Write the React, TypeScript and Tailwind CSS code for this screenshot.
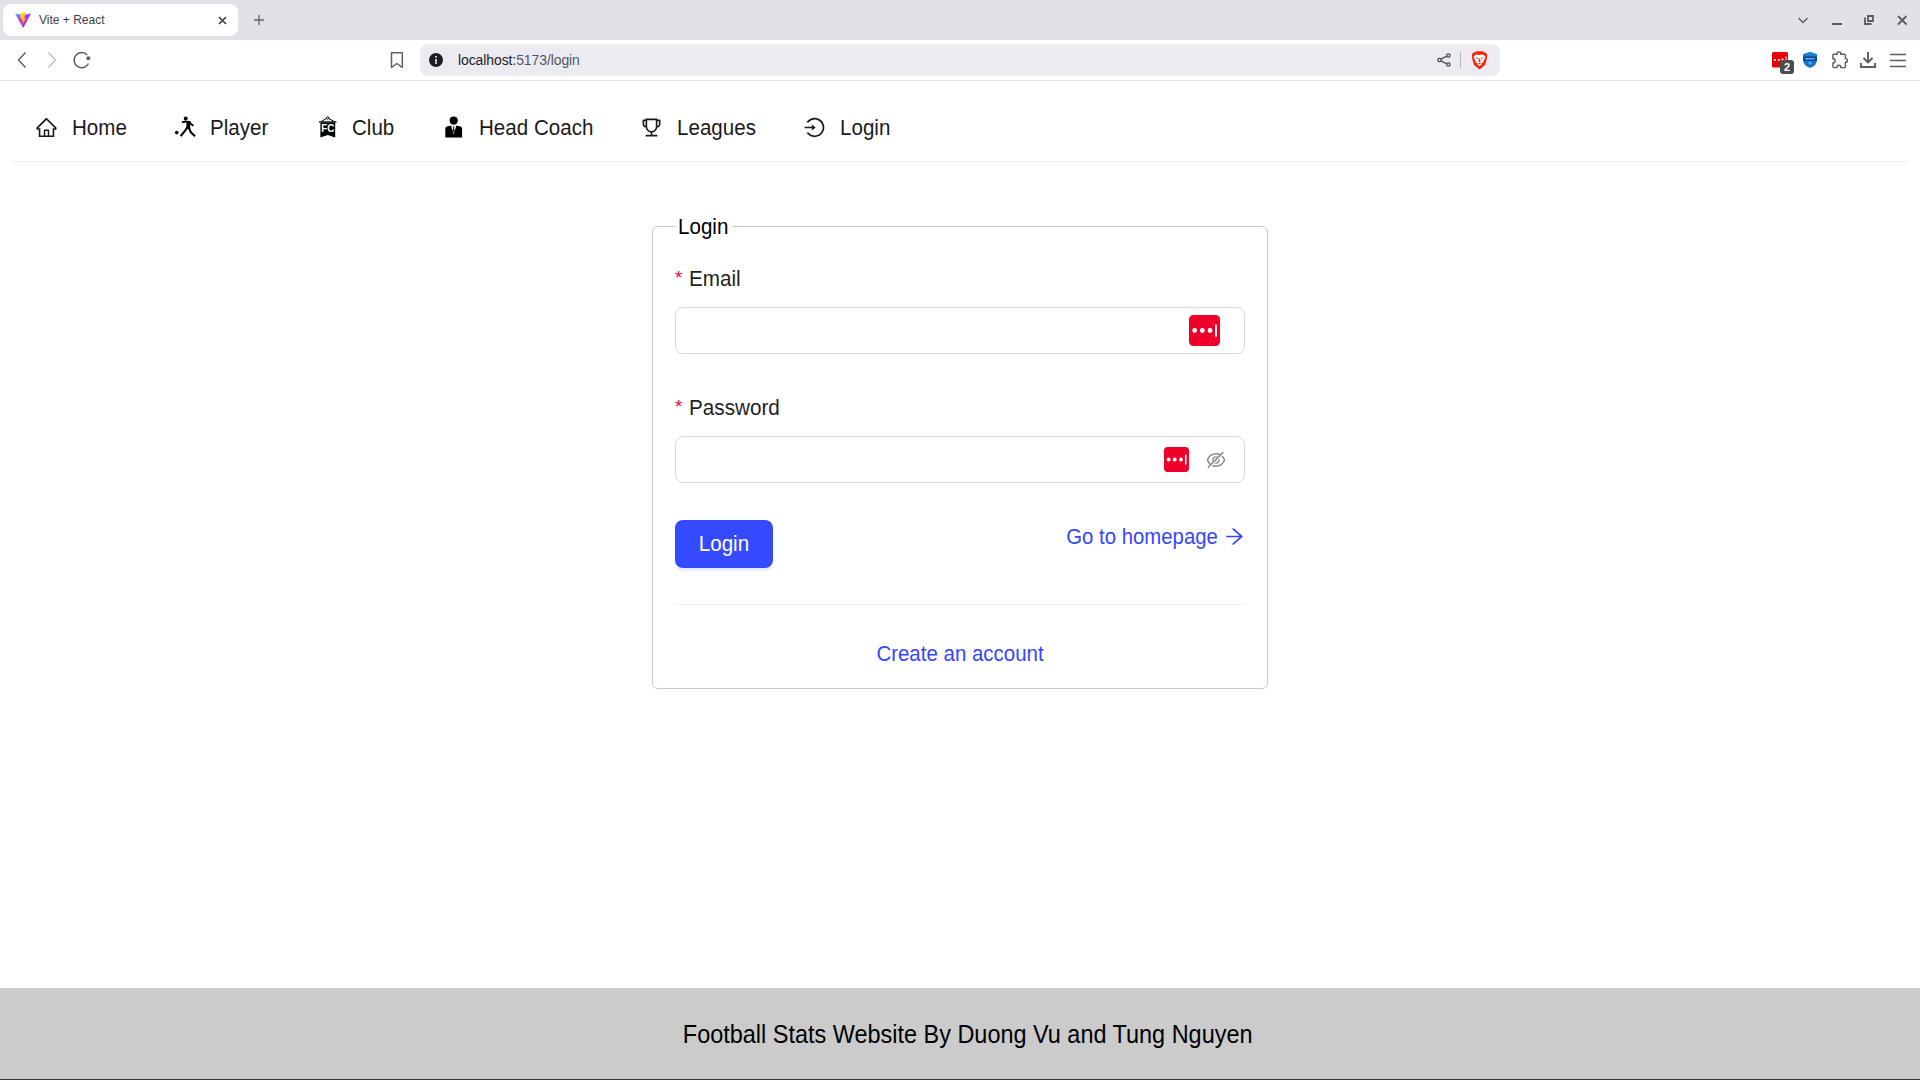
import React from "react";
import {
  AiOutlineHome,
  AiOutlineTrophy,
  AiOutlineLogin,
  AiOutlineEyeInvisible,
  AiOutlineArrowRight,
} from "react-icons/ai";

const PlayerIcon = () => (
  <svg width="23" height="23" viewBox="-1.5 0 23 23" className="block shrink-0">
    <circle cx="11.2" cy="2.6" r="2" />
    <circle cx="2.2" cy="16.6" r="1.8" />
    <path d="M9.5 4.8 L15.6 5 L15.8 13.2 L11.8 12.6 L12 6.8 Z" />
    <path d="M12 5.6 L7.4 6.2 M14.800 5.6 L16.8 8.300 L19 9.800" fill="none" stroke="black" strokeWidth="1.7" />
    <path d="M13 11 L10.400 15 L6.200 20.200 M14.200 11.600 L16.400 16.400 L20.600 20.200" fill="none" stroke="black" strokeWidth="2.1" />
  </svg>
);

const ClubIcon = () => (
  <svg width="23" height="23" viewBox="-3 0 23 23" className="block shrink-0">
    <path d="M3 5.6 L9.7 1.9 L16.4 5.6" fill="none" stroke="black" strokeWidth="1" />
    <circle cx="9.7" cy="1.9" r="1.2" fill="white" stroke="black" strokeWidth="0.9" />
    <path d="M1 5.3h17.4v1.3H1z" />
    <path d="M2.4 6.5h14.8V21.5l-7.4-2.6-7.4 2.6z" />
    <text x="9.8" y="15.9" textAnchor="middle" fontSize="10" fontWeight="700" fill="white" fontFamily="Liberation Sans, sans-serif">FC</text>
  </svg>
);

const CoachIcon = () => (
  <svg width="23" height="23" viewBox="-2.5 0 23 23" className="block shrink-0">
    <circle cx="9.2" cy="4.6" r="4.1" />
    <path d="M.8 21.5v-8.600q0-2.300 2.400-2.700L6 9.800h6.400l2.800.4q2.400.4 2.400 2.700v8.600z" />
    <path d="M6.600 9.500L9.200 18.500L11.800 9.500z" fill="white" />
    <path d="M8.500 10.400h1.400l-.3 1.500.5 3.200-.9 2-.9-2 .5-3.200z" />
  </svg>
);

const ViteLogo = () => (
  <svg width="16" height="16" viewBox="0 0 16 16" className="block">
    <defs>
      <linearGradient id="vite-base" x1="0" y1="0" x2="0.7" y2="1">
        <stop offset="0" stopColor="#30c8ff" />
        <stop offset="0.4" stopColor="#a33cff" />
        <stop offset="1" stopColor="#e600ff" />
      </linearGradient>
      <linearGradient id="vite-bolt" x1="0" y1="0" x2="0" y2="1">
        <stop offset="0" stopColor="#ffe02a" />
        <stop offset="1" stopColor="#ff9d00" />
      </linearGradient>
    </defs>
    <path d="M0 1.6L8 3l8-1.4L8.2 16z" fill="url(#vite-base)" />
    <path d="M11.4 0L5.6 1.1l-.4 6.1 1.9-.4-.6 2.9 1.5-.4-.9 4.1 4-7.3-2 .4z" fill="url(#vite-bolt)" />
  </svg>
);

const BraveIcon = () => (
  <svg width="17" height="19" viewBox="0 0 17 19" className="block">
    <path d="M4 1.4L5.4.2h6.2L13 1.4l1.7.2 1.6 2.2-.5 1.4.3 1.4-1.9 7.2L8.5 18.5 2.8 13.8.9 6.6l.3-1.4L.7 3.8l1.6-2.2z" fill="#fb2207" />
    <path d="M4 4l1.8-.5 2.7.5 2.7-.5L13 4l1.5 2.6-2 2.8.3 1.6-2.3 1.1.2 1.2-2.2 2-2.2-2 .2-1.2L4.2 11l.3-1.6-2-2.8z" fill="white" />
    <path d="M4.600 6.300l2.700.6-.9 1.300zM12.400 6.300l-2.700.6.9 1.300zM7.900 7.500h1.200l.5 3-1.100.9-1.100-.9zM6.900 12.700l1.600-.7 1.600.7-1.600.8z" fill="#fb2207" />
  </svg>
);

const PasswordBadge = ({ size }: { size: number }) => (
  <svg width={size} height={size} viewBox="0 0 31 31" className="block">
    <rect width="31" height="31" rx="4.5" fill="#ee0028" />
    <circle cx="5.7" cy="15.5" r="2.4" fill="white" />
    <circle cx="13.3" cy="15.5" r="2.4" fill="white" />
    <circle cx="21" cy="15.5" r="2.4" fill="white" />
    <rect x="26" y="9.4" width="1.9" height="12.4" rx=".5" fill="white" />
  </svg>
);

const navItems = [
  { label: "Home", icon: <AiOutlineHome size={23} />, width: "w-[138px]" },
  { label: "Player", icon: <PlayerIcon />, width: "w-[142px]" },
  { label: "Club", icon: <ClubIcon />, width: "w-[127px]" },
  { label: "Head Coach", icon: <CoachIcon />, width: "w-[198px]" },
  { label: "Leagues", icon: <AiOutlineTrophy size={23} />, width: "w-[163px]" },
  { label: "Login", icon: <AiOutlineLogin size={23} />, width: "w-[120px]" },
];

const TabStrip = () => (
  <div className="flex h-10 items-center justify-between bg-[#e2e1e8] pl-[3px]">
    <div className="flex items-center">
      <div className="flex h-8 w-[235px] items-center rounded-lg bg-white pl-3 pr-[11px]">
        <ViteLogo />
        <span className="ml-2 flex-1 text-[12px] leading-4 text-[#3d3e45]">Vite + React</span>
        <svg width="9" height="9" viewBox="0 0 9 9"><path d="M1 1l7 7M8 1L1 8" stroke="#3f4047" strokeWidth="1.7" /></svg>
      </div>
      <svg className="ml-4" width="10" height="10" viewBox="0 0 10 10"><path d="M5 0v10M0 5h10" stroke="#66676d" strokeWidth="1.3" /></svg>
    </div>
    <svg width="122" height="40" viewBox="0 0 122 40" fill="none" stroke="#5b5c62" strokeWidth="1.8">
      <path d="M0.5 18l4.5 4.5 4.5-4.5" strokeWidth="1.5" />
      <path d="M34 24h10" strokeWidth="2" />
      <path d="M70 16h5v5h-5zM67 17.5V24h6.5" />
      <path d="M100 16l8.5 8.5M108.5 16l-8.5 8.5" />
    </svg>
  </div>
);

const Toolbar = () => (
  <div className="flex h-[41px] items-center border-b border-[#e2e1e8]">
    <svg width="420" height="40" viewBox="0 0 420 40" fill="none" stroke="#5f6067" strokeWidth="1.5" className="shrink-0">
      <path d="M25.5 12.5L18.5 20l7 7.5" />
      <path d="M48.5 12.5l7 7.5-7 7.5" stroke="#c0c0c4" />
      <path d="M87.3 15A7.6 7.6 0 1 0 88.5 23.5" />
      <circle cx="88.3" cy="18.2" r="2" fill="#5f6067" stroke="none" />
      <path d="M391.5 12.8h10.8v14.7l-5.4-4-5.4 4z" strokeLinejoin="round" />
    </svg>
    <div className="flex h-8 w-[1080px] items-center rounded-lg bg-[#ecebf2] pl-[9px] pr-3">
      <svg width="14" height="14" viewBox="0 0 14 14"><circle cx="7" cy="7" r="7" fill="#1d1e24" /><path d="M7 3v1.7M7 6v5" stroke="#ecebf2" strokeWidth="1.6" /></svg>
      <span className="ml-[15px] flex-1 text-[14px] leading-5 tracking-[-0.1px] text-[#55565d]"><span className="text-[#1d1e24]">localhost:</span>5173/login</span>
      <svg width="14" height="14" viewBox="0 0 14 14" fill="none" stroke="#4c4d54" strokeWidth="1.3"><circle cx="2.5" cy="7" r="1.7" /><circle cx="11.4" cy="2.5" r="1.7" /><circle cx="11.4" cy="11.5" r="1.7" /><path d="M4 6.2l5.8-3M4 7.8l5.8 3" /></svg>
      <div className="ml-[9px] mr-[10px] h-4 w-px bg-[#b3b2b9]" />
      <BraveIcon />
    </div>
    <svg width="150" height="40" viewBox="0 0 150 40" fill="none" stroke="#5b5c62" strokeWidth="1.6" className="ml-auto shrink-0">
      <rect x="2" y="12" width="16" height="15.5" rx="1.5" fill="#e80006" stroke="none" />
      <g fill="white" stroke="none"><circle cx="5" cy="20" r="1.1" /><circle cx="8.8" cy="20" r="1.1" /><circle cx="12.5" cy="19.7" r="1.1" /><path d="M15.5 16.5h1v4h-1z" /></g>
      <rect x="10" y="20" width="14" height="14" rx="3" fill="#4d4e50" stroke="none" />
      <text x="17" y="31" textAnchor="middle" fontSize="11" fontWeight="700" fill="white" stroke="none" fontFamily="Liberation Sans, sans-serif">2</text>
      <path d="M40 12l7 2.3v5.6q0 5.2-7 8.2-7-3-7-8.2v-5.6z" fill="#1671c9" stroke="none" />
      <path d="M40 12l7 2.3v1.2H33v-1.2z" fill="#1b86cb" stroke="none" />
      <path d="M33 16.5h14v4.500H33z" fill="#0b4596" stroke="none" />
      <path d="M35.500 18.800h9" stroke="#8fd5f2" strokeWidth="1.6" strokeDasharray="1.2 .5" />
      <path d="M38.500 23h3M40 21.500v3" stroke="#4fd5ee" strokeWidth="1" />
      <path d="M63.5 14.2h3.6q-.5-2.3 1.8-2.3t1.9 2.3h3.6q1 0 1 1v3.4q2-.2 2 1.8t-2 1.9v4.1q0 1.2-1 1.2h-3.500q0-2.300-2-2.300t-2 2.300h-3q-1 0-1-1V23q2.200 0 2.200-2.200t-2.200-2.300v-3.300q0-1 .6-1z" strokeWidth="1.4" />
      <path d="M98 12v10.5M93.5 18l4.5 4.5 4.5-4.5" strokeWidth="1.9" />
      <path d="M90.9 23v4h14.2v-4" strokeWidth="1.9" />
      <path d="M120 14.5h16M120 20.5h16M120 26.5h16" strokeWidth="1.5" />
    </svg>
  </div>
);

const Label = ({ text }: { text: string }) => (
  <div className="flex h-8 items-center pb-[2px] text-[22px] text-[#1f1f1f]">
    <span className="mr-2 inline-block w-[6px] text-[19px] leading-5 text-[#ff0044]">*</span>
    <span className="origin-left scale-x-[0.94]">{text}</span>
  </div>
);

export default function App() {
  return (
    <div className="flex h-[1080px] w-[1920px] flex-col overflow-hidden bg-white font-['Liberation_Sans',Arial,sans-serif] text-black">
      <TabStrip />
      <Toolbar />
      <nav className="mx-3 flex h-[81px] items-center border-b border-[#efefef] pl-[23px] pt-[13px]">
        {navItems.map((item) => (
          <a key={item.label} className={`flex items-center gap-[14px] whitespace-nowrap text-[22px] text-[#1a1a1a] ${item.width}`}>
            {item.icon}
            <span className="origin-left scale-x-[0.935]">{item.label}</span>
          </a>
        ))}
      </nav>
      <main className="flex-1 pt-[50px]">
        <fieldset className="mx-auto h-[477px] w-[616px] rounded-md border border-[#c9c9c9] px-[22px]">
          <legend className="h-7 w-[57px] pl-[3px] text-[22px] leading-[29px]"><span className="inline-block origin-left scale-x-[0.935]">Login</span></legend>
          <div className="pt-[23px]">
            <Label text="Email" />
            <div className="mt-3 flex h-[47px] items-center justify-end rounded-lg border border-[#d9d9d9] pr-6">
              <PasswordBadge size={31} />
            </div>
          </div>
          <div className="pt-[38px]">
            <Label text="Password" />
            <div className="mt-3 flex h-[47px] items-center justify-end gap-4 rounded-lg border border-[#d9d9d9] pr-[17px]">
              <PasswordBadge size={25} />
              <AiOutlineEyeInvisible size={22} className="text-[#8c8c8c]" />
            </div>
          </div>
          <div className="mt-[37px] flex items-start justify-between border-b border-[#efefef] pb-9">
            <button className="h-12 w-[98px] rounded-lg bg-[#354aff] pb-[2px] text-[22px] text-white shadow-[0_3px_0_#e6f1ff]"><span className="inline-block scale-x-[0.935]">Login</span></button>
            <a className="flex items-center gap-[5px] text-[22px] leading-[33px] text-[#3546ff]">
              <span className="origin-right scale-x-[0.925]">Go to homepage</span>
              <AiOutlineArrowRight size={23} className="-mr-px -mt-px" />
            </a>
          </div>
          <div className="mt-[33px] scale-x-[0.93] text-center text-[22px] leading-8 text-[#3546ff]">Create an account</div>
        </fieldset>
      </main>
      <footer className="flex h-[92px] items-center justify-center border-b border-[#333333] bg-[#cbcbcb] pl-[15px] pt-[2px] text-[25px]">
        <span className="scale-x-[0.938]">Football Stats Website By Duong Vu and Tung Nguyen</span>
      </footer>
    </div>
  );
}
